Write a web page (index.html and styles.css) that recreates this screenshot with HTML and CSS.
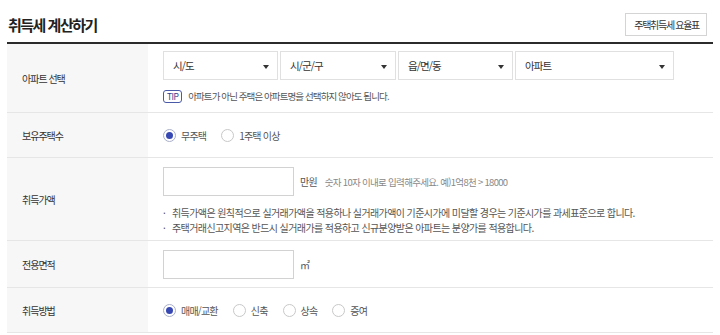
FILE: index.html
```html
<!DOCTYPE html>
<html lang="ko">
<head>
<meta charset="utf-8">
<title>취득세 계산하기</title>
<link rel="stylesheet" href="styles.css">
</head>
<body>
<div class="wrap">
  <div class="head">
    <h1 class="title">취득세 계산하기</h1>
    <button class="rate-btn" type="button">주택취득세 요율표</button>
  </div>
  <div class="form">
    <div class="row row-apt">
      <div class="th">아파트 선택</div>
      <div class="td">
        <div class="selects">
          <div class="sel w115">시/도<span class="arrow"></span></div>
          <div class="sel w116">시/군/구<span class="arrow"></span></div>
          <div class="sel w115">읍/면/동<span class="arrow"></span></div>
          <div class="sel w159">아파트<span class="arrow"></span></div>
        </div>
        <div class="tip"><span class="tip-badge">TIP</span><span class="tip-text">아파트가 아닌 주택은 아파트명을 선택하지 않아도 됩니다.</span></div>
      </div>
    </div>
    <div class="row row-h44">
      <div class="th">보유주택수</div>
      <div class="td radios">
        <label class="radio on"><span class="dot"></span>무주택</label>
        <label class="radio"><span class="dot"></span>1주택 이상</label>
      </div>
    </div>
    <div class="row row-price">
      <div class="th">취득가액</div>
      <div class="td">
        <div class="inline">
          <span class="box"></span><span class="unit">만원</span><span class="hint">숫자 10자 이내로 입력해주세요. 예)1억8천 &gt; 18000</span>
        </div>
        <ul class="notes">
          <li>취득가액은 원칙적으로 실거래가액을 적용하나 실거래가액이 기준시가에 미달할 경우는 기준시가를 과세표준으로 합니다.</li>
          <li>주택거래신고지역은 반드시 실거래가를 적용하고 신규분양받은 아파트는 분양가를 적용합니다.</li>
        </ul>
      </div>
    </div>
    <div class="row row-area">
      <div class="th">전용면적</div>
      <div class="td">
        <div class="inline"><span class="box"></span><span class="unit">㎡</span></div>
      </div>
    </div>
    <div class="row row-h44">
      <div class="th">취득방법</div>
      <div class="td radios">
        <label class="radio on"><span class="dot"></span>매매/교환</label>
        <label class="radio"><span class="dot"></span>신축</label>
        <label class="radio"><span class="dot"></span>상속</label>
        <label class="radio"><span class="dot"></span>증여</label>
      </div>
    </div>
  </div>
</div>
</body>
</html>
```
FILE: styles.css
```css
* { box-sizing: border-box; }
html, body { margin: 0; padding: 0; background: #fff; }
body {
  font-family: "Noto Sans CJK KR", "Noto Sans", sans-serif;
  color: #333;
}
.wrap { margin-left: 7px; width: 706px; }
.head {
  height: 44px;
  padding-top: 6px;
  display: flex;
  align-items: center;
  justify-content: space-between;
  border-bottom: 2px solid #2b2b2b;
}
.title {
  margin: 0 0 0 1px;
  font-size: 15px;
  font-weight: 700;
  letter-spacing: -1.5px;
  color: #222;
}
.rate-btn {
  height: 23px;
  padding: 0 7px 0 8px;
  margin-right: 6px;
  background: #fff;
  border: 1px solid #d4d4d4;
  font-family: inherit;
  font-size: 10px;
  letter-spacing: -1.3px;
  color: #333;
}
.row {
  display: flex;
  border-bottom: 1px solid #e6e6e6;
}
.th {
  width: 141px;
  flex: none;
  background: #f7f7f7;
  display: flex;
  align-items: center;
  padding-left: 15px;
  font-size: 10px;
  letter-spacing: -1px;
  color: #333;
}
.td { flex: 1; padding-left: 15px; }
.row-apt { height: 69px; }
.row-apt .td { padding-top: 7px; }
.row-h44 { height: 45px; }
.row-price { height: 83px; }
.row-price .td { padding-top: 9px; }
.row-area { height: 47px; }
.row-area .td { padding-top: 9px; }

.selects { display: flex; gap: 2px; }
.sel {
  position: relative;
  height: 29px;
  border: 1px solid #e0e0e0;
  display: flex;
  align-items: center;
  padding-left: 9px;
  font-size: 10.5px;
  letter-spacing: -0.9px;
  color: #333;
}
.w115 { width: 115px; }
.w116 { width: 116px; }
.w159 { width: 159px; }
.arrow {
  position: absolute;
  right: 8px;
  top: 13px;
  width: 0;
  height: 0;
  border-left: 3px solid transparent;
  border-right: 3px solid transparent;
  border-top: 4px solid #333;
}
.tip { display: flex; align-items: center; margin-top: 9px; }
.tip-badge {
  height: 13px;
  padding: 0 3px;
  border: 1px solid #4a5aa8;
  border-radius: 3px;
  font-size: 8.5px;
  line-height: 11px;
  color: #2f3c8f;
  letter-spacing: -0.6px;
}
.tip-text {
  margin-left: 6px;
  font-size: 9.5px;
  letter-spacing: -0.9px;
  color: #555;
}

.radios { display: flex; align-items: center; }
.radio {
  display: flex;
  align-items: center;
  font-size: 10px;
  letter-spacing: -0.8px;
  color: #555;
  margin-right: 15px;
}
.dot {
  width: 13px;
  height: 13px;
  border: 1px solid #c8c8c8;
  border-radius: 50%;
  background: #fff;
  margin-right: 5px;
  display: flex;
  align-items: center;
  justify-content: center;
}
.radio.on .dot { border-color: #a9afc9; }
.radio.on .dot::after {
  content: "";
  width: 7px;
  height: 7px;
  border-radius: 50%;
  background: #3748b3;
}

.inline { display: flex; align-items: center; }
.box {
  width: 131px;
  height: 29px;
  border: 1px solid #d2d2d2;
  background: #fff;
}
.unit {
  margin-left: 6px;
  font-size: 10px;
  font-weight: 400;
  letter-spacing: -0.8px;
  color: #555;
}
.hint {
  margin-left: 8px;
  font-size: 9.5px;
  letter-spacing: -0.7px;
  color: #888;
}
.notes {
  list-style: none;
  margin: 9px 0 0;
  padding: 0;
  font-size: 10px;
  letter-spacing: -0.6px;
  color: #555;
  line-height: 15px;
}
.notes li { position: relative; padding-left: 9px; }
.notes li::before {
  content: "·";
  position: absolute;
  left: 0;
  top: 0;
}
```
